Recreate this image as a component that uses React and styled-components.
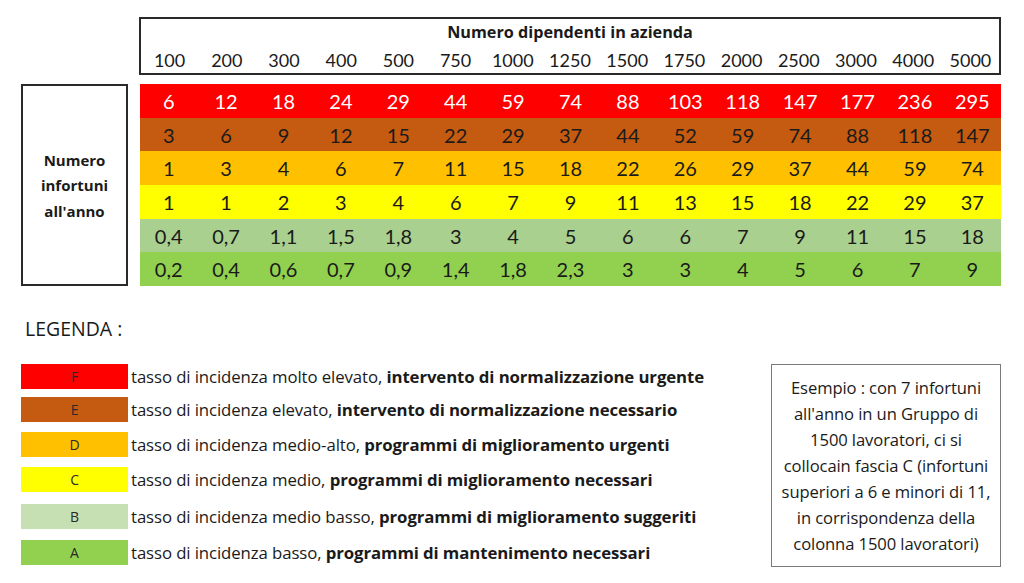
import React from 'react';
import styled, { createGlobalStyle } from 'styled-components';

const GlobalStyle = createGlobalStyle`
  html, body {
    margin: 0;
    padding: 0;
    background: #ffffff;
  }
  body {
    font-family: "Open Sans", Lato, "Liberation Sans", sans-serif;
    color: #1a1a1a;
  }
`;

const Page = styled.div`
  width: 1024px;
  height: 583px;
  box-sizing: border-box;
  padding: 17px 23px 0 21px;
  display: flex;
  flex-direction: column;
`;

const HeaderRow = styled.div`
  display: flex;
  padding-left: 118px;
`;

const HeaderBox = styled.div`
  flex: 1;
  height: 58px;
  box-sizing: border-box;
  border: 2px solid #2a2a2a;
  display: flex;
  flex-direction: column;
  align-items: stretch;
`;

const HeaderTitle = styled.div`
  font-weight: 700;
  font-size: 16.2px;
  text-align: center;
  line-height: 24px;
  margin-top: 1px;
  margin-bottom: 5px;
`;

const Cols = styled.div`
  display: grid;
  grid-template-columns: repeat(15, 1fr);
  font-family: Lato, "Open Sans", sans-serif;
  font-size: ${p => p.$size || 20}px;
  line-height: ${p => p.$lh || 24}px;
`;

const Cell = styled.div`
  text-align: center;
`;

const Body = styled.div`
  display: flex;
  gap: 12px;
  margin-top: 9px;
`;

const SideBox = styled.div`
  width: 107px;
  height: 202px;
  box-sizing: border-box;
  border: 2px solid #2a2a2a;
  display: flex;
  align-items: center;
  justify-content: center;
  text-align: center;
  font-weight: 700;
  font-size: 15px;
  line-height: 25.5px;
  padding-top: 2px;
`;

const Table = styled.div`
  flex: 1;
  display: flex;
  flex-direction: column;
`;

const DataRow = styled(Cols)`
  height: 33.7px;
  align-items: center;
  background: ${p => p.$bg};
  color: ${p => p.$fg || '#1a1a1a'};
`;

const Legenda = styled.div`
  font-size: 19.5px;
  margin: 31px 0 0 4px;
  line-height: 24px;
`;

const Bottom = styled.div`
  display: flex;
  justify-content: space-between;
  margin-top: 23px;
`;

const LegendList = styled.div`
  display: flex;
  flex-direction: column;
`;

const LegendItem = styled.div`
  display: flex;
  align-items: center;
  height: 25px;
  margin-bottom: ${p => p.$gap}px;
  font-size: 16.8px;
  letter-spacing: -0.1px;
`;

const Swatch = styled.div`
  width: 107px;
  height: 25px;
  background: ${p => p.$bg};
  font-size: 14px;
  display: flex;
  align-items: center;
  justify-content: center;
  margin-right: 3px;
  color: #2a2a2a;
`;

const ExampleBox = styled.div`
  width: 230px;
  height: 203px;
  box-sizing: border-box;
  border: 1px solid #7a7a7a;
  display: flex;
  align-items: center;
  justify-content: center;
  text-align: center;
  font-size: 16.6px;
  letter-spacing: -0.1px;
  line-height: 26px;
  white-space: nowrap;
`;

const cols = [100, 200, 300, 400, 500, 750, 1000, 1250, 1500, 1750, 2000, 2500, 3000, 4000, 5000];

const rows = [
  { bg: '#ff0000', fg: '#ffffff', v: ['6', '12', '18', '24', '29', '44', '59', '74', '88', '103', '118', '147', '177', '236', '295'] },
  { bg: '#c55a11', v: ['3', '6', '9', '12', '15', '22', '29', '37', '44', '52', '59', '74', '88', '118', '147'] },
  { bg: '#ffc000', v: ['1', '3', '4', '6', '7', '11', '15', '18', '22', '26', '29', '37', '44', '59', '74'] },
  { bg: '#ffff00', v: ['1', '1', '2', '3', '4', '6', '7', '9', '11', '13', '15', '18', '22', '29', '37'] },
  { bg: '#a9d08e', v: ['0,4', '0,7', '1,1', '1,5', '1,8', '3', '4', '5', '6', '6', '7', '9', '11', '15', '18'] },
  { bg: '#92d050', v: ['0,2', '0,4', '0,6', '0,7', '0,9', '1,4', '1,8', '2,3', '3', '3', '4', '5', '6', '7', '9'] },
];

const legend = [
  { k: 'F', bg: '#ff0000', t: 'tasso di incidenza molto elevato, ', b: 'intervento di normalizzazione urgente', gap: 8 },
  { k: 'E', bg: '#c55a11', t: 'tasso di incidenza elevato, ', b: 'intervento di normalizzazione necessario', gap: 10 },
  { k: 'D', bg: '#ffc000', t: 'tasso di incidenza medio-alto, ', b: 'programmi di miglioramento urgenti', gap: 10 },
  { k: 'C', bg: '#ffff00', t: 'tasso di incidenza medio, ', b: 'programmi di miglioramento necessari', gap: 12 },
  { k: 'B', bg: '#c6e0b4', t: 'tasso di incidenza medio basso, ', b: 'programmi di miglioramento suggeriti', gap: 11 },
  { k: 'A', bg: '#92d050', t: 'tasso di incidenza basso, ', b: 'programmi di mantenimento necessari', gap: 0 },
];

const exampleLines = [
  'Esempio : con 7 infortuni',
  "all'anno in un Gruppo di",
  '1500 lavoratori, ci si',
  'collocain fascia C (infortuni',
  'superiori a 6 e minori di 11,',
  'in corrispondenza della',
  'colonna 1500 lavoratori)',
];

export default function App() {
  return (
    <Page>
      <GlobalStyle />
      <HeaderRow>
        <HeaderBox>
          <HeaderTitle>Numero dipendenti in azienda</HeaderTitle>
          <Cols $size={18} $lh={22}>
            {cols.map(c => <Cell key={c}>{c}</Cell>)}
          </Cols>
        </HeaderBox>
      </HeaderRow>

      <Body>
        <SideBox>Numero<br />infortuni<br />all'anno</SideBox>
        <Table>
          {rows.map((r, i) => (
            <DataRow key={i} $bg={r.bg} $fg={r.fg}>
              {r.v.map((v, j) => <Cell key={j}>{v}</Cell>)}
            </DataRow>
          ))}
        </Table>
      </Body>

      <Legenda>LEGENDA :</Legenda>

      <Bottom>
        <LegendList>
          {legend.map(l => (
            <LegendItem key={l.k} $gap={l.gap}>
              <Swatch $bg={l.bg}>{l.k}</Swatch>
              <span>{l.t}<b>{l.b}</b></span>
            </LegendItem>
          ))}
        </LegendList>
        <ExampleBox>
          <div>
            {exampleLines.map((line, i) => (
              <React.Fragment key={i}>{line}{i < exampleLines.length - 1 && <br />}</React.Fragment>
            ))}
          </div>
        </ExampleBox>
      </Bottom>
    </Page>
  );
}
